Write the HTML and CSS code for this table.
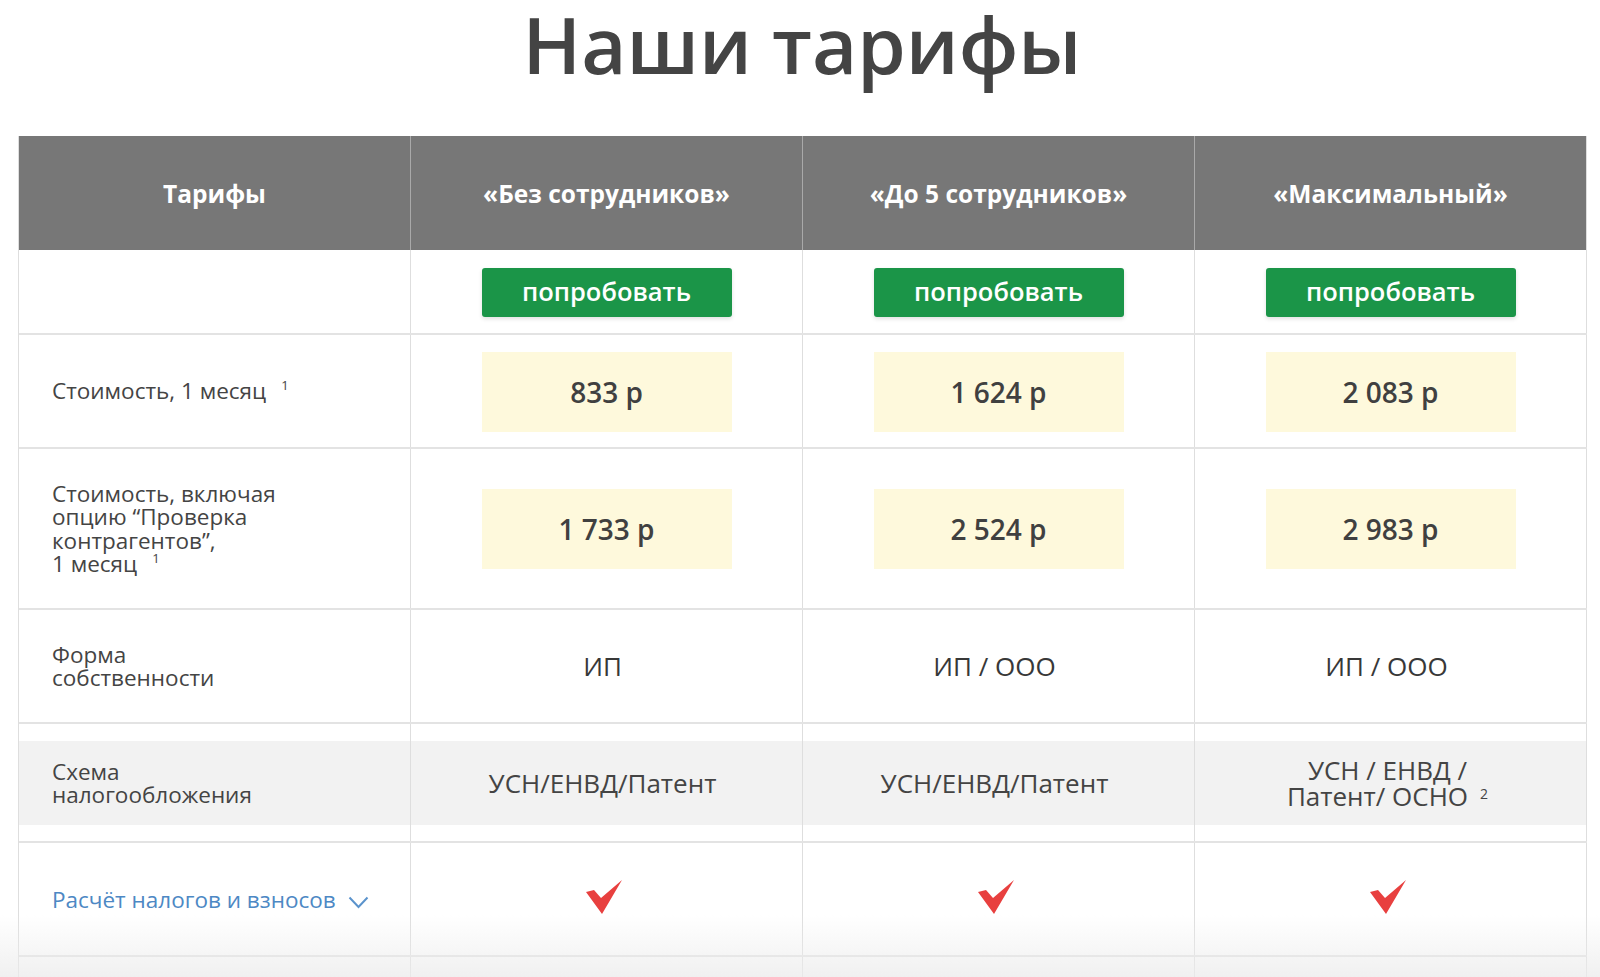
FILE: index.html
```html
<!DOCTYPE html>
<html lang="ru">
<head>
<meta charset="utf-8">
<title>Наши тарифы</title>
<link rel="stylesheet" href="styles.css">
</head>
<body>
<main class="page">
  <h1 class="title">Наши тарифы</h1>
  <div class="tariffs">
    <div class="row row-head">
      <div class="cell">Тарифы</div>
      <div class="cell">«Без сотрудников»</div>
      <div class="cell">«До 5 сотрудников»</div>
      <div class="cell">«Максимальный»</div>
    </div>
    <div class="row row-btn">
      <div class="cell cell-label"></div>
      <div class="cell cell-val"><a class="try" href="#">попробовать</a></div>
      <div class="cell cell-val"><a class="try" href="#">попробовать</a></div>
      <div class="cell cell-val"><a class="try" href="#">попробовать</a></div>
    </div>
    <div class="row row-price1">
      <div class="cell cell-label"><span>Стоимость, 1 месяц<sup class="note">1</sup></span></div>
      <div class="cell cell-val"><div class="price">833 р</div></div>
      <div class="cell cell-val"><div class="price">1 624 р</div></div>
      <div class="cell cell-val"><div class="price">2 083 р</div></div>
    </div>
    <div class="row row-price2">
      <div class="cell cell-label"><span>Стоимость, включая<br>опцию “Проверка<br>контрагентов”,<br>1 месяц<sup class="note">1</sup></span></div>
      <div class="cell cell-val"><div class="price">1 733 р</div></div>
      <div class="cell cell-val"><div class="price">2 524 р</div></div>
      <div class="cell cell-val"><div class="price">2 983 р</div></div>
    </div>
    <div class="row row-form">
      <div class="cell cell-label"><span>Форма<br>собственности</span></div>
      <div class="cell cell-val"><span class="val">ИП</span></div>
      <div class="cell cell-val"><span class="val">ИП / ООО</span></div>
      <div class="cell cell-val"><span class="val">ИП / ООО</span></div>
    </div>
    <div class="row row-tax">
      <div class="cell cell-band"><div class="band band-label"><span>Схема<br>налогообложения</span></div></div>
      <div class="cell cell-band"><div class="band"><span class="val">УСН/ЕНВД/Патент</span></div></div>
      <div class="cell cell-band"><div class="band"><span class="val">УСН/ЕНВД/Патент</span></div></div>
      <div class="cell cell-band"><div class="band"><span class="val val-two">УСН / ЕНВД /<br>Патент/ ОСНО<sup class="note">2</sup></span></div></div>
    </div>
    <div class="row row-check">
      <div class="cell cell-label"><a class="more" href="#">Расчёт налогов и взносов<svg class="chev" width="21" height="13" viewBox="0 0 21 13"><path d="M1.5 1.5 L10.5 11 L19.5 1.5" fill="none" stroke="#5b93cc" stroke-width="2"/></svg></a></div>
      <div class="cell cell-val"><svg class="tick" width="36" height="34" viewBox="0 0 36 34"><polygon points="0,12 8,10 15,18 36,0 16,34" fill="#e8403f"/></svg></div>
      <div class="cell cell-val"><svg class="tick" width="36" height="34" viewBox="0 0 36 34"><polygon points="0,12 8,10 15,18 36,0 16,34" fill="#e8403f"/></svg></div>
      <div class="cell cell-val"><svg class="tick" width="36" height="34" viewBox="0 0 36 34"><polygon points="0,12 8,10 15,18 36,0 16,34" fill="#e8403f"/></svg></div>
    </div>
    <div class="row row-next">
      <div class="cell cell-label"></div>
      <div class="cell cell-val"></div>
      <div class="cell cell-val"></div>
      <div class="cell cell-val"></div>
    </div>
  </div>
</main>
<div class="fade"></div>
</body>
</html>
```

FILE: styles.css
```css
html, body {
  margin: 0;
  padding: 0;
  background: #ffffff;
}
body {
  font-family: "Open Sans", "Noto Sans", sans-serif;
  color: #444444;
  overflow: hidden;
  height: 977px;
}
.page {
  padding: 5px 14px 0 18px;
}
.title {
  margin: 0 0 53px;
  font-size: 78px;
  line-height: 78px;
  font-weight: 600;
  color: #444444;
  text-align: center;
}
.tariffs {
  width: 1568px;
  border-left: 1px solid #dedede;
}
.row {
  display: grid;
  grid-template-columns: repeat(4, 1fr);
  border-bottom: 2px solid #e3e3e3;
}
.cell {
  border-right: 1px solid #dedede;
  display: flex;
  align-items: center;
  justify-content: center;
  min-width: 0;
}
.row-head {
  height: 114px;
  background: #777777;
  border-bottom: 0;
}
.row-head .cell {
  color: #ffffff;
  font-weight: 700;
  font-size: 24.5px;
  border-right: 1px solid #a9a9a9;
}
.row-head .cell:last-child {
  border-right: 1px solid #dedede;
}
.row-btn { height: 83px; }
.row-price1 { height: 112px; }
.row-price2 { height: 159px; }
.row-form { height: 112px; }
.row-tax { height: 117px; }
.row-check { height: 112px; }
.row-next { height: 100px; }

.cell-label {
  justify-content: flex-start;
  padding-left: 33px;
  font-size: 22.5px;
  line-height: 23.5px;
  color: #444444;
}
.cell-val {
  color: #383838;
}
.try {
  display: block;
  width: 250px;
  height: 49px;
  margin-top: 2px;
  box-sizing: border-box;
  background: #1b9548;
  border-radius: 3px;
  box-shadow: 0 2px 4px rgba(0, 0, 0, 0.12);
  color: #ffffff;
  text-decoration: none;
  font-size: 25.5px;
  font-weight: 600;
  line-height: 47px;
  text-align: center;
}
.price {
  width: 250px;
  height: 80px;
  background: #fef9dc;
  display: flex;
  align-items: center;
  justify-content: center;
  font-size: 28px;
  font-weight: 600;
  color: #404040;
}
.row-price1 .price { margin-top: 2px; }
.note {
  font-size: 13px;
  vertical-align: 9px;
  line-height: 0;
  margin-left: 15px;
}
.val {
  font-size: 26px;
  line-height: 26px;
  margin-left: -8px;
}
.val-two {
  text-align: center;
  margin-left: -6px;
}
.val-two .note {
  font-size: 14px;
  margin-left: 12px;
  vertical-align: 7px;
}
.cell-band {
  align-items: stretch;
  justify-content: stretch;
  padding: 17px 0 16px;
}
.band {
  flex: 1;
  background: #f2f2f2;
  display: flex;
  align-items: center;
  justify-content: center;
}
.band-label {
  justify-content: flex-start;
  padding-left: 33px;
  font-size: 22.5px;
  line-height: 23.5px;
  color: #444444;
}
.more {
  color: #4d88c4;
  text-decoration: none;
  font-size: 22.5px;
  display: inline-flex;
  align-items: center;
  margin-top: 2px;
}
.chev {
  margin-left: 12px;
  margin-top: 4px;
}
.tick {
  margin-left: -6px;
  margin-top: -4px;
}
.fade {
  position: fixed;
  left: 0;
  right: 0;
  bottom: 0;
  height: 64px;
  background: linear-gradient(to bottom, rgba(236, 236, 236, 0), rgba(236, 236, 236, 0.75));
  pointer-events: none;
}
```
